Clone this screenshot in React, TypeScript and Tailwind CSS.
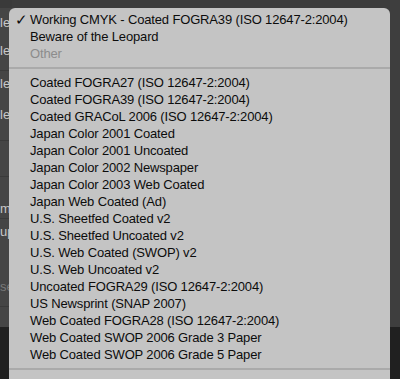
import React from "react";

const topItems = ["Beware of the Leopard"];

const profiles = [
  "Coated FOGRA27 (ISO 12647-2:2004)",
  "Coated FOGRA39 (ISO 12647-2:2004)",
  "Coated GRACoL 2006 (ISO 12647-2:2004)",
  "Japan Color 2001 Coated",
  "Japan Color 2001 Uncoated",
  "Japan Color 2002 Newspaper",
  "Japan Color 2003 Web Coated",
  "Japan Web Coated (Ad)",
  "U.S. Sheetfed Coated v2",
  "U.S. Sheetfed Uncoated v2",
  "U.S. Web Coated (SWOP) v2",
  "U.S. Web Uncoated v2",
  "Uncoated FOGRA29 (ISO 12647-2:2004)",
  "US Newsprint (SNAP 2007)",
  "Web Coated FOGRA28 (ISO 12647-2:2004)",
  "Web Coated SWOP 2006 Grade 3 Paper",
  "Web Coated SWOP 2006 Grade 5 Paper",
];

function Row({ label, checked, disabled }: { label: string; checked?: boolean; disabled?: boolean }) {
  return (
    <div className={`flex items-center h-[17px] ${disabled ? "text-[#8c8c8c]" : "text-[#0c0c0c]"}`}>
      <span className="w-[21px] pl-[6px] text-[15px] leading-none">{checked ? "✓" : ""}</span>
      <span className="whitespace-nowrap tracking-[-0.15px]">{label}</span>
    </div>
  );
}

function Separator() {
  return (
    <div className="h-[12px] flex items-center">
      <div className="h-[2px] w-full bg-[#aaaaaa]" />
    </div>
  );
}

export default function App() {
  return (
    <div
      className="relative w-[400px] h-[379px] overflow-hidden bg-[#3c3c3c]"
      style={{ fontFamily: '"Liberation Sans", Arial, sans-serif' }}
    >
      {/* panel behind the menu */}
      <div className="flex flex-col h-full">
        <div className="flex flex-1">
          <div className="w-[12px] bg-[#454545] text-[13px] text-[#c8c8c8] leading-none flex flex-col">
            <div className="h-[8px] bg-[#3a3a3a]" />
            <div className="pt-[8px] h-[30px]">le</div>
            <div className="h-[32px] pt-[6px]">le</div>
            <div className="h-[32px] pt-[6px] border-t border-[#3a3a3a]">le</div>
            <div className="h-[38px] pt-[6px]">le</div>
            <div className="h-[36px] border-t border-[#3a3a3a]" />
            <div className="h-[22px] border-t border-[#3a3a3a]" />
            <div className="h-[20px] pt-[4px]">m</div>
            <div className="h-[32px] pt-[6px] border-t border-[#3a3a3a]">up</div>
            <div className="h-[56px] pt-[30px] text-[#7a7a7a]">se</div>
            <div className="flex-1 border-t border-[#3a3a3a]" />
          </div>
          <div className="flex-1" />
          <div className="w-[10px] bg-[#3e3e3e]" />
        </div>
        <div className="h-[52px] bg-[#202020]" />
      </div>

      {/* the pop-up menu */}
      <div className="absolute left-[9px] top-[8px] w-[381px] h-[380px] rounded-t-[6px] bg-[#c4c4c4] text-[13px] leading-[17px] pt-[3px]">
        <Row label="Working CMYK - Coated FOGRA39 (ISO 12647-2:2004)" checked />
        {topItems.map((t) => (
          <Row key={t} label={t} />
        ))}
        <Row label="Other" disabled />
        <Separator />
        {profiles.map((p) => (
          <Row key={p} label={p} />
        ))}
        <Separator />
      </div>
    </div>
  );
}
